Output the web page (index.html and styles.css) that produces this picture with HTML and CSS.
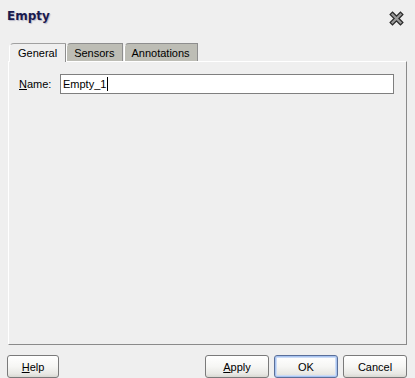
FILE: index.html
```html
<!DOCTYPE html>
<html>
<head>
<meta charset="utf-8">
<link rel="stylesheet" href="styles.css">
</head>
<body>
<div class="dialog">
  <div class="titlebar">
    <span class="title">Empty</span>
    <svg class="close" width="15" height="15" viewBox="0 0 15 15">
      <path d="M3.5 3.5 L11.5 11.5 M11.5 3.5 L3.5 11.5" stroke="#2a2a2a" stroke-width="4.6" stroke-linecap="square" fill="none"/>
      <path d="M3.5 3.5 L11.5 11.5 M11.5 3.5 L3.5 11.5" stroke="#9a9a9a" stroke-width="2.2" stroke-linecap="square" fill="none"/>
    </svg>
  </div>
  <div class="tabs">
    <div class="tab active">General</div>
    <div class="tab">Sensors</div>
    <div class="tab">Annotations</div>
  </div>
  <div class="panel">
    <div class="row">
      <span class="label"><u>N</u>ame:</span>
      <div class="field"><span>Empty_1</span><span class="caret"></span></div>
    </div>
  </div>
  <div class="buttons">
    <button class="btn help"><u>H</u>elp</button>
    <div class="spacer"></div>
    <button class="btn"><u>A</u>pply</button>
    <button class="btn ok">OK</button>
    <button class="btn">Cancel</button>
  </div>
</div>
</body>
</html>
```
FILE: styles.css
```css
html, body {
  margin: 0;
  padding: 0;
  background: #efefef;
  overflow: hidden;
}
.dialog {
  width: 415px;
  height: 378px;
  box-sizing: border-box;
  padding: 0 8px 0 8px;
  display: flex;
  flex-direction: column;
  font-family: "Liberation Sans", Arial, sans-serif;
  font-size: 11px;
  color: #000;
}
.titlebar {
  height: 43px;
  display: flex;
  align-items: flex-start;
  justify-content: space-between;
}
.title {
  margin-top: 9px;
  margin-left: -1px;
  font-family: "DejaVu Sans", Verdana, sans-serif;
  font-weight: bold;
  font-size: 12px;
  color: #1a1a4e;
  text-shadow: 1px 1px 1px #b8b8c8;
}
.close {
  margin-top: 11px;
  margin-right: 3px;
}
.tabs {
  display: flex;
  height: 18px;
  padding-left: 1px;
}
.tab {
  box-sizing: border-box;
  height: 18px;
  padding: 2px 7px 0 7px;
  line-height: 14px;
  background: #bdbdb5;
  border-top: 1px solid #8e8e8e;
  border-left: 1px solid #ffffff;
  border-right: 1px solid #8e8e8e;
  border-top-left-radius: 5px 4px;
  margin-right: 1px;
}
.tab.active {
  background: #efefef;
  border-top: 1px solid #a0a0a0;
  border-left: 1px solid #ffffff;
  border-right: 1px solid #8e8e8e;
  height: 19px;
  margin-bottom: -1px;
  margin-right: 0;
  position: relative;
  z-index: 1;
  padding-left: 8px;
  padding-right: 8px;
}
.panel {
  height: 287px;
  box-sizing: border-box;
  border-top: 1px solid #ffffff;
  border-left: 1px solid #ffffff;
  border-right: 1px solid #8a8a8a;
  border-bottom: 1px solid #8a8a8a;
  padding: 12px 12px 0 10px;
}
.row {
  display: flex;
  align-items: center;
}
.label {
  width: 41px;
}
.field {
  flex: 1;
  height: 20px;
  box-sizing: border-box;
  border: 1px solid #7f7f7f;
  background: #fff;
  display: flex;
  align-items: center;
  padding-left: 2px;
}
.caret {
  display: inline-block;
  width: 1px;
  height: 14px;
  background: #000;
  margin-left: 1px;
}
.buttons {
  display: flex;
  gap: 5px;
  margin-top: 10px;
}
.spacer {
  flex: 1;
}
.btn {
  width: 64px;
  height: 23px;
  box-sizing: border-box;
  border: 1px solid #7a7a7a;
  border-radius: 3px;
  background: linear-gradient(#ffffff 0%, #f6f6f4 50%, #e8e8e4 85%, #d8d8d2 100%);
  font-family: "Liberation Sans", Arial, sans-serif;
  font-size: 11px;
  color: #000;
  padding: 0;
}
.btn.help {
  width: 52px;
  margin-left: -1px;
}
.btn.ok {
  border-color: #5a6f9a;
  box-shadow: inset 0 0 0 1px #a8c4f0, inset 0 0 0 2px #cddcf6;
}
```
